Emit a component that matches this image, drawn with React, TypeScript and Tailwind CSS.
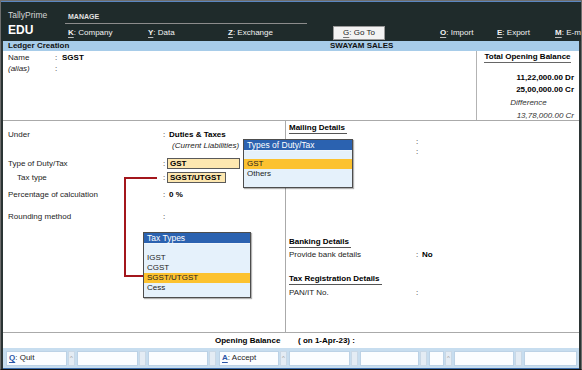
const menu = [
  { k: "K", label: "Company", w: "w-[83px] pl-[3px]" },
  { k: "Y", label: "Data", w: "w-[80px]" },
  { k: "Z", label: "Exchange", w: "w-[105px]" },
];

const menuRight = [
  { k: "O", label: "Import", w: "w-[57px]" },
  { k: "E", label: "Export", w: "w-[58px]" },
  { k: "M", label: "E-m", w: "w-[24px]" },
];

// [margin-left, width, kind, label]
const buttons: [string, string, "w" | "n", string][] = [
  ["ml-0", "w-[61px]", "w", "Q:Quit"],
  ["ml-[1px]", "w-[7px]", "n", "^"],
  ["ml-[2px]", "w-[61px]", "w", ""],
  ["ml-[1px]", "w-[7px]", "n", ""],
  ["ml-[2px]", "w-[60px]", "w", ""],
  ["ml-[1px]", "w-[7px]", "n", ""],
  ["ml-[3px]", "w-[60px]", "w", "A:Accept"],
  ["ml-[1px]", "w-[7px]", "n", "^"],
  ["ml-[2px]", "w-[61px]", "w", ""],
  ["ml-[1px]", "w-[7px]", "n", ""],
  ["ml-[2px]", "w-[59px]", "w", ""],
  ["ml-[1px]", "w-[7px]", "n", ""],
  ["ml-[2px]", "w-[15px]", "w", ""],
  ["ml-[1px]", "w-[7px]", "n", "^"],
  ["ml-[2px]", "w-[60px]", "w", ""],
  ["ml-[1px]", "w-[7px]", "n", ""],
  ["ml-[2px]", "w-[53px]", "w", ""],
];

function Key({ k }: { k: string }) {
  return (
    <span className="font-bold underline underline-offset-[2px] decoration-[#bbbbbb]">{k}</span>
  );
}

function Label({ children, className = "" }: { children: React.ReactNode; className?: string }) {
  return <span className={`w-[155px] shrink-0 ${className}`}>{children}</span>;
}

export default function App() {
  return (
    <div className="w-[582px] h-[370px] relative overflow-hidden flex flex-col bg-white border border-[#6e6e6e] border-b-[#111] font-['Liberation_Sans',Arial,sans-serif] text-[8px] leading-[10px] text-[#1c1c1c]">
      {/* header */}
      <div className="h-[40px] shrink-0 flex bg-[#1f2b2b] border-t border-[#5b86c0]">
        <div className="w-[64px] shrink-0 pl-[7px] pt-[8px] flex flex-col">
          <span className="text-[8.5px] leading-[10px] text-[#d6d6d6]">TallyPrime</span>
          <span className="mt-[4px] text-[12px] leading-[12px] font-bold text-white">EDU</span>
        </div>
        <div className="flex-1 flex flex-col">
          <div className="pt-[11px] pl-[3px] text-[7px] leading-[8px] font-bold text-[#e2e2e2]">MANAGE</div>
          <div className="mt-[2px] h-px w-[242px] bg-[#8c8c8c]" />
          <div className="mt-[2px] h-[14px] flex items-center text-[#f2f2f2] whitespace-nowrap">
            {menu.map((m) => (
              <span key={m.k} className={`${m.w} shrink-0`}>
                <Key k={m.k} />: {m.label}
              </span>
            ))}
            <span className="w-[52px] h-[14px] shrink-0 bg-[#f3f3f3] border border-[#9a9a9a] text-[#222] flex items-center justify-center">
              <span className="underline underline-offset-[2px] decoration-[#777]">G</span>: Go To
            </span>
            <span className="w-[55px] shrink-0" />
            {menuRight.map((m) => (
              <span key={m.k} className={`${m.w} shrink-0`}>
                <Key k={m.k} />: {m.label}
              </span>
            ))}
          </div>
        </div>
      </div>

      {/* body */}
      <div className="flex-1 flex flex-col border-x-2 border-[#2b3434]">
        <div className="h-[10px] shrink-0 flex items-center bg-[#a7cce9] font-bold text-[#111]">
          <span className="w-[327px] pl-[5px] shrink-0">Ledger Creation</span>
          <span>SWAYAM SALES</span>
        </div>

        {/* name + totals */}
        <div className="h-[70px] shrink-0 flex border-b border-[#aaaaaa]">
          <div className="flex-1 pl-[5px] pt-[2px] flex flex-col">
            <div className="flex">
              <span className="w-[47px]">Name</span>
              <span className="w-[7px]">:</span>
              <span className="font-bold text-black">SGST</span>
            </div>
            <div className="flex mt-px">
              <span className="w-[47px] italic">(alias)</span>
              <span>:</span>
            </div>
          </div>
          <div className="w-[103px] shrink-0 border-l border-[#b3b3b3] pr-[5px] flex flex-col items-end text-black">
            <span className="self-center ml-[4px] mt-px inline-block border-b border-[#666] font-bold">Total Opening Balance</span>
            <span className="mt-[10px] font-bold">11,22,000.00 Dr</span>
            <span className="mt-[2px] font-bold">25,00,000.00 Cr</span>
            <span className="mt-[3px] self-center ml-[6px] italic text-[#333]">Difference</span>
            <div className="h-px w-[93px] bg-[#9a9a9a]" />
            <span className="mt-[3px] italic text-[#333]">13,78,000.00 Cr</span>
          </div>
        </div>

        {/* details */}
        <div className="flex-1 flex">
          <div className="w-[283px] shrink-0 border-r border-[#aaaaaa] pl-[5px] flex flex-col">
            <div className="mt-[9px] flex">
              <Label>Under</Label>
              <span className="w-[6px]">:</span>
              <span className="font-bold text-black">Duties &amp; Taxes</span>
            </div>
            <div className="mt-px pl-[164px] italic">(Current Liabilities)</div>
            <div className="mt-[7px] h-[11px] flex items-center">
              <Label>Type of Duty/Tax</Label>
              <span className="w-[4px]">:</span>
              <span className="w-[73px] h-[11px] pl-[2px] bg-[#fde7b0] border border-[#5a5a5a] font-bold text-black leading-[9px]">GST</span>
            </div>
            <div className="mt-[3px] h-[11px] flex items-center">
              <Label className="pl-[9px]">Tax type</Label>
              <span className="w-[4px]">:</span>
              <span className="w-[59px] h-[11px] pl-[2px] bg-[#fde7b0] border border-[#5a5a5a] font-bold text-black leading-[9px]">SGST/UTGST</span>
            </div>
            <div className="mt-[7px] flex">
              <Label>Percentage of calculation</Label>
              <span className="w-[6px]">:</span>
              <span className="font-bold text-black">0 %</span>
            </div>
            <div className="mt-[12px] flex">
              <Label>Rounding method</Label>
              <span>:</span>
            </div>
          </div>

          <div className="flex-1 pl-[3px] flex flex-col items-start">
            <span className="mt-[2px] inline-block border-b border-[#555] pr-[2px] font-bold text-black">Mailing Details</span>
            <div className="mt-[3px] flex pl-[127px]">
              <span>:</span>
            </div>
            <div className="flex pl-[127px]">
              <span>:</span>
            </div>
            <span className="mt-[80px] inline-block border-b border-[#555] pr-[2px] font-bold text-black">Banking Details</span>
            <div className="mt-[2px] flex">
              <span className="w-[127px]">Provide bank details</span>
              <span className="w-[6px]">:</span>
              <span className="font-bold text-black">No</span>
            </div>
            <span className="mt-[14px] inline-block border-b border-[#555] pr-[2px] font-bold text-black">Tax Registration Details</span>
            <div className="mt-[3px] flex">
              <span className="w-[127px]">PAN/IT No.</span>
              <span>:</span>
            </div>
          </div>
        </div>

        {/* opening balance */}
        <div className="h-[16px] shrink-0 border-t border-[#aaaaaa] pl-[212px] flex items-center font-bold text-black">
          <span className="w-[83px]">Opening Balance</span>
          <span>( on 1-Apr-23) :</span>
        </div>

        {/* button bar */}
        <div className="h-[21px] shrink-0 bg-[#c7ddef] border-b border-[#3f6fae] pl-[3px] flex items-center whitespace-nowrap">
          {buttons.map(([ml, w, kind, label], i) => (
            <div
              key={i}
              className={`${ml} ${w} h-[15px] shrink-0 flex items-center ${
                kind === "w"
                  ? "bg-[#fbfdff] border border-[#bcd2e6] pl-[2px]"
                  : "bg-[#e4ecf4] border border-[#c9d8e6] justify-center text-[6px] text-[#9a9a9a]"
              }`}
            >
              {kind === "w" && label ? (
                <span className="text-[#1c1c1c]">
                  <span className="text-[#2a55a6] font-bold underline underline-offset-[2px]">{label[0]}</span>
                  : {label.slice(2)}
                </span>
              ) : (
                label
              )}
            </div>
          ))}
        </div>
      </div>

      {/* connector annotation */}
      <svg className="absolute left-0 top-0 pointer-events-none" width="582" height="370">
        <path d="M156 177 H124 V275 H142" fill="none" stroke="#a3161c" strokeWidth="2" />
      </svg>

      {/* Types of Duty/Tax popup */}
      <div className="absolute left-[242px] top-[138px] w-[110px] h-[49px] flex flex-col bg-[#e5f1fb] border border-[#4d4d4d] shadow-[1px_1px_1px_rgba(0,0,0,0.3)]">
        <div className="h-[11px] shrink-0 bg-[#2b62b0] text-white text-[8.5px] leading-[11px] pl-[3px] border-b border-[#f0f6fc]">Types of Duty/Tax</div>
        <div className="h-[8px] shrink-0" />
        <div className="h-[10px] shrink-0 bg-[#fcc22f] pl-[3px] leading-[10px]">GST</div>
        <div className="pl-[3px] leading-[10px]">Others</div>
      </div>

      {/* Tax Types popup */}
      <div className="absolute left-[142px] top-[231px] w-[108px] h-[66px] flex flex-col bg-[#e5f1fb] border border-[#4d4d4d] shadow-[1px_1px_1px_rgba(0,0,0,0.3)]">
        <div className="h-[11px] shrink-0 bg-[#2b62b0] text-white text-[8.5px] leading-[11px] pl-[3px] border-b border-[#f0f6fc]">Tax Types</div>
        <div className="h-[9px] shrink-0" />
        <div className="h-[10px] pl-[3px] leading-[10px]">IGST</div>
        <div className="h-[10px] pl-[3px] leading-[10px]">CGST</div>
        <div className="h-[10px] bg-[#fcc22f] pl-[3px] leading-[10px]">SGST/UTGST</div>
        <div className="h-[10px] pl-[3px] leading-[10px]">Cess</div>
      </div>
    </div>
  );
}
